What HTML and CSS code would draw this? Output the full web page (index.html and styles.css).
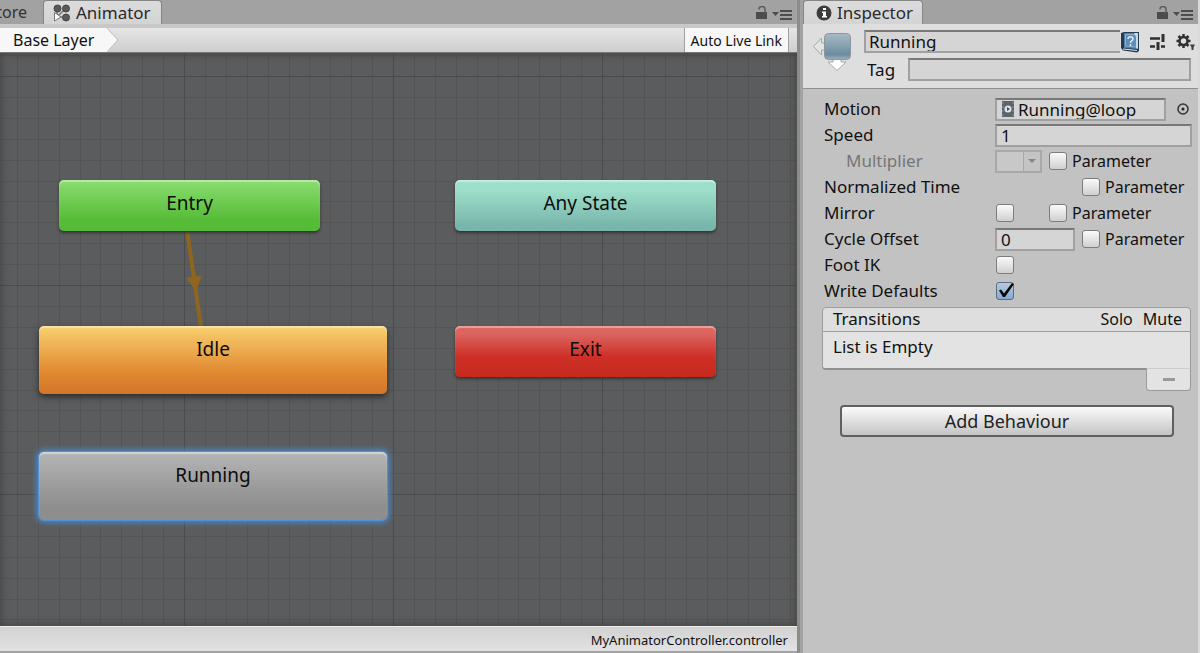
FILE: index.html
```
<!DOCTYPE html>
<html lang="en">
<head>
<meta charset="utf-8">
<title>Animator</title>
<link rel="stylesheet" href="styles.css">
</head>
<body>
<svg class="defs" aria-hidden="true">
  <symbol id="panel-menu" viewBox="0 0 38 14">
    <path d="M1 6h11v7H1z" fill="#4c4c4c"/>
    <path d="M4 3.500V3a3 2.500 0 0 1 6 0v5" fill="none" stroke="#5c5c5c" stroke-width="1.500"/>
    <path d="M17 6h7l-3.500 4z" fill="#4c4c4c"/>
    <path d="M25 5h12M25 9h12M25 13h12" stroke="#4c4c4c" stroke-width="2"/>
  </symbol>
</svg>
<main class="editor">
  <section class="panel animator">
    <header class="tabs">
      <button class="tab tab-cut">tore</button>
      <button class="tab tab-active tab-animator">
        <svg width="18" height="18" viewBox="0 0 18 18" aria-hidden="true">
          <path d="M3.500 6L5 13M9.500 13H7M11 6L5 12" stroke="#777" stroke-width="1.500" fill="none"/>
          <g fill="#5a5a5a" stroke="#444"><circle cx="4.500" cy="4.500" r="3.500"/><circle cx="13" cy="4.500" r="3.500"/><circle cx="13" cy="13.500" r="3.500"/></g>
          <path d="M1.500 8.500v8.500l6.500-4z" fill="#fff" stroke="#777"/>
        </svg>
        Animator
      </button>
      <button class="menu" aria-label="Animator panel menu"><svg width="38" height="14"><use href="#panel-menu"/></svg></button>
    </header>
    <div class="toolbar">
      <button class="crumb"><span>Base Layer</span>
        <svg width="12" height="24" viewBox="0 0 12 24" aria-hidden="true"><path d="M0 0l11 12L0 24z" fill="#f7f7f7"/><path d="M0 0l11 12L0 24" fill="none" stroke="#bbb"/></svg>
      </button>
      <button class="live">Auto Live Link</button>
    </div>
    <div class="canvas">
      <svg class="grid" aria-hidden="true">
        <defs>
          <pattern id="cells" x="184" y="23" width="209" height="209" patternUnits="userSpaceOnUse">
            <path d="M21.500 0v209M42.500 0v209M63.500 0v209M84.500 0v209M105.500 0v209M125.500 0v209M146.500 0v209M167.500 0v209M188.500 0v209M0 21.500h209M0 42.500h209M0 63.500h209M0 84.500h209M0 105.500h209M0 125.500h209M0 146.500h209M0 167.500h209M0 188.500h209" stroke="#555453"/>
            <path d="M.5 0v209M0 .5h209" stroke="#4a4b4a"/>
          </pattern>
        </defs>
        <rect width="100%" height="100%" fill="url(#cells)"/>
        <g stroke="#8f651f" fill="#8f651f">
          <path d="M187 177L201 274" stroke-width="4"/>
          <path d="M187 225l14-2-5 15z" stroke-width="1"/>
        </g>
      </svg>
      <button class="node entry">Entry</button>
      <button class="node any">Any State</button>
      <button class="node idle">Idle</button>
      <button class="node exit">Exit</button>
      <button class="node running">Running</button>
    </div>
    <footer class="status">MyAnimatorController.controller</footer>
  </section>

  <section class="panel inspector">
    <header class="tabs">
      <button class="tab tab-active tab-inspector">
        <svg width="16" height="16" viewBox="0 0 16 16" aria-hidden="true"><circle cx="8" cy="8" r="7.500" fill="#3c3c3c"/><path d="M7 3h3v2H7zM6 6.500h4V11h1v1.500H6V11h1V8H6z" fill="#fff"/></svg>
        Inspector
      </button>
      <button class="menu" aria-label="Inspector panel menu"><svg width="38" height="14"><use href="#panel-menu"/></svg></button>
    </header>
    <div class="heading">
      <svg class="state-icon" width="42" height="42" viewBox="0 0 42 42" aria-hidden="true">
        <defs><linearGradient id="state" x2="0" y2="1"><stop offset="0" stop-color="#a9bac6"/><stop offset=".5" stop-color="#83a0ae"/><stop offset=".8" stop-color="#6c8ba0"/><stop offset="1" stop-color="#9db2be"/></linearGradient></defs>
        <path d="M1.500 16.500L9.500 8v5h5v7h-5v5z" fill="#e4e4e4" stroke="#a8a8a8"/>
        <path d="M21 28v4h-5l9 8.500 9-8.500h-5v-4z" fill="#fff" stroke="#a8a8a8"/>
        <rect x="12.500" y="3.500" width="26" height="26" rx="4" fill="url(#state)" stroke="#8a979f"/>
      </svg>
      <div class="identity">
        <div class="identity-row">
          <input class="field name" aria-label="State name" value="Running">
          <button class="icon-button help" aria-label="Help">
            <svg width="20" height="22" viewBox="0 0 20 22" aria-hidden="true">
              <path d="M1 2L4 1H19V20L17 21.500 3 19.500 1 17z" fill="#283a4d"/>
              <path d="M4 2h14v16l-14-1z" fill="#4e7eab"/><path d="M5.500 3.500h11v12.500l-11-1z" fill="#5d8cba" stroke="#8bb0d2"/>
              <path d="M14 2h4v16l-2-1V6z" fill="#c6d8e6"/><path d="M3 18l14 1.500" stroke="#dbe3ea"/>
              <path d="M8 8c0-3 5-3 5 0 0 2-2.500 1.500-2.500 4M10.500 13v2" fill="none" stroke="#dbe8f3" stroke-width="1.500"/>
            </svg>
          </button>
          <button class="icon-button" aria-label="Presets">
            <svg width="16" height="18" viewBox="0 0 16 18" aria-hidden="true"><path d="M0 5.500h10M0 13.500h5M11 13.500h4" stroke="#303030" stroke-width="2.500"/><path d="M13 1v8M8 9v8" stroke="#303030" stroke-width="3"/></svg>
          </button>
          <button class="icon-button" aria-label="Settings">
            <svg width="20" height="18" viewBox="0 0 20 18" aria-hidden="true">
              <circle cx="7.500" cy="8" r="4" fill="none" stroke="#303030" stroke-width="2.500"/>
              <path d="M7.500 1v2.500M7.500 12.500V15M.5 8H3M12 8h2.500M2.500 3l2 2M10.500 11l2 2M12.500 3l-2 2M4.500 11l-2 2" stroke="#303030" stroke-width="2.500"/>
              <path d="M14 11.500h5L17.500 14.500V17h-2v-2.500z" fill="#404040"/>
            </svg>
          </button>
        </div>
        <div class="identity-row">
          <label class="tag-label" for="tag">Tag</label>
          <input class="field tag" id="tag">
        </div>
      </div>
    </div>

    <div class="form">
      <div class="row">
        <label for="motion">Motion</label>
        <div class="value">
          <div class="field object">
            <svg width="12" height="16" viewBox="0 0 12 16" aria-hidden="true"><path d="M0 0h12v16H0z" fill="#59656c"/><path d="M1 1v14M11 1v14" stroke="#86929a" stroke-dasharray="2 2"/><circle cx="6" cy="8" r="3.500" fill="#dfe3e5"/><path d="M5 6v4l3-2z" fill="#3e484e"/></svg>
            <input id="motion" value="Running@loop">
          </div>
          <button class="icon-button picker" aria-label="Select motion">
            <svg width="14" height="14" viewBox="0 0 14 14" aria-hidden="true"><circle cx="7" cy="7" r="5" fill="none" stroke="#333" stroke-width="1.500"/><circle cx="7" cy="7" r="1.500" fill="#222"/></svg>
          </button>
        </div>
      </div>
      <div class="row"><label for="speed">Speed</label><div class="value"><input class="field grow" id="speed" value="1"></div></div>
      <div class="row">
        <label class="muted" for="multiplier">Multiplier</label>
        <div class="value"><span class="drop"><select id="multiplier" disabled><option></option></select></span><label class="check"><input type="checkbox">Parameter</label></div>
      </div>
      <div class="row"><span>Normalized Time</span><div class="value end"><label class="check"><input type="checkbox">Parameter</label></div></div>
      <div class="row"><label for="mirror">Mirror</label><div class="value"><span class="slot"><input type="checkbox" id="mirror"></span><label class="check"><input type="checkbox">Parameter</label></div></div>
      <div class="row"><label for="offset">Cycle Offset</label><div class="value"><input class="field offset" id="offset" value="0"><label class="check"><input type="checkbox">Parameter</label></div></div>
      <div class="row"><label for="foot">Foot IK</label><div class="value"><span class="slot"><input type="checkbox" id="foot"></span></div></div>
      <div class="row"><label for="defaults">Write Defaults</label><div class="value"><span class="slot ticked"><input type="checkbox" id="defaults" checked><svg width="18" height="18" viewBox="0 0 18 18" aria-hidden="true"><path d="M3 8.500l2-1 3 4L16 1l2 1-9 13H7z" fill="#080808"/></svg></span></div></div>
    </div>

    <div class="transitions">
      <div class="list-head"><span>Transitions</span><span class="column solo">Solo</span><span class="column">Mute</span></div>
      <div class="list-body">List is Empty</div>
      <button class="remove" aria-label="Remove transition"><svg width="12" height="3" aria-hidden="true"><path d="M0 0h12v3H0z" fill="#999"/></svg></button>
    </div>
    <button class="add">Add Behaviour</button>
  </section>
</main>
</body>
</html>
```
FILE: styles.css
```
* { box-sizing: border-box; }
body { margin: 0; font: 17px/24px "Noto Sans", "Open Sans", sans-serif; color: #111; background: #a2a2a2; }
button, input, select { font: inherit; color: inherit; margin: 0; }
button { border: 0; padding: 0; background: none; }
.defs { position: absolute; width: 0; height: 0; }
svg { flex: none; display: block; }

.editor { display: grid; grid-template-columns: minmax(0, 2fr) minmax(0, 1fr); min-height: 100vh; }
.panel { display: flex; flex-direction: column; }
.animator { border-right: 3px solid #8c8c8c; padding-bottom: 2px; }
.inspector { background: #c2c2c2; border-left: 3px solid #a2a2a2; border-right: 2px solid #dadada; }

.tabs { display: flex; height: 24px; background: #a2a2a2; }
.tab { display: flex; align-items: center; line-height: 22px; }
.tab-cut { justify-content: flex-end; width: 27px; overflow: hidden; margin-right: 16px; font-size: 16px; color: #333; }
.tab-active { gap: 5px; color: #2a2a2a; background: linear-gradient(#dcdcdc, #d4d4d4); border: 1px solid #858585; border-bottom: 0; border-radius: 4px 4px 0 0; }
.tab-animator { padding: 0 10px 0 9px; }
.tab-inspector { padding: 0 9px 0 12px; }
.menu { margin-left: auto; padding: 2px 4px 0 0; }

.toolbar { display: flex; justify-content: space-between; height: 29px; padding-right: 8px; border-top: 4px solid #c8c8c8; border-bottom: 1px solid #777; background: linear-gradient(#e6e6e6, #cecece); }
.crumb { display: flex; font-size: 16px; }
.crumb span { padding: 0 0 0 13px; width: 107px; text-align: left; background: #f7f7f7; line-height: 24px; }
.live { padding: 2px 6px 0; font-size: 14px; line-height: 22px; background: #f7f7f7; border: 1px solid #a0a0a0; border-width: 0 1px; }

.canvas { position: relative; flex: 1; min-height: 500px; overflow: hidden; background: #5b5c5d; }
.grid { position: absolute; width: 100%; height: 100%; }
.canvas::after { content: ""; position: absolute; inset: 0; box-shadow: inset 0 0 8px #3f3f3f; pointer-events: none; }
.node { position: absolute; width: 261px; height: 51px; padding-top: 11px; display: flex; justify-content: center; font-size: 19px; border-radius: 5px; color: #0c0c0c; box-shadow: 0 2px 3px #333, inset 0 2px 1px #ffffff66; }
.entry { left: 59px; top: 127px; background: linear-gradient(#8ade70, #56bb36 80%); }
.any { left: 455px; top: 127px; background: linear-gradient(#9ddfca 20%, #78b5aa 90%); }
.exit { left: 455px; top: 273px; background: linear-gradient(#dc6560 15%, #ce3028 60%, #c6291c); }
.idle, .running { width: 348px; height: 68px; }
.idle { left: 39px; top: 273px; background: linear-gradient(#f9d070, #e0872f 70%, #d4752a); box-shadow: 0 3px 6px #2b2b2b, inset 0 2px 1px #ffffff66; }
.running { left: 39px; top: 399px; background: linear-gradient(#b5b5b5, #8e8e8e 80%); box-shadow: 0 0 0 1px #5190d2, 0 0 6px 2px #4790da, inset 0 2px 1px #ffffff66; }

.status { height: 25px; padding-right: 9px; text-align: right; font-size: 13px; line-height: 27px; background: linear-gradient(#d2d2d2, #e2e2e2); border-top: 1px solid #eee; }

.heading { display: flex; height: 65px; padding: 6px 2px 0 9px; background: #dedede; border-bottom: 1px solid #8f8f8f; }
.identity { flex: 1; min-width: 0; padding-left: 10px; }
.identity-row { display: flex; align-items: center; height: 23px; margin-bottom: 5px; }
.field { height: 23px; min-width: 0; padding: 0 4px; border: 2px solid #a0a0a0; border-top-color: #787878; border-radius: 0; background: #d5d5d5; outline: 0; line-height: 19px; }
.name { flex: 1; border-right: 0; padding-left: 3px; }
.icon-button { flex: none; margin-left: 10px; }
.help { margin-left: 0; }
.tag-label { padding-left: 3px; width: 44px; }
.tag { flex: 1; margin-right: 5px; }

.form { display: flex; flex-direction: column; gap: 3px; padding: 8px 6px 0 21px; }
.row { display: grid; grid-template-columns: 171px minmax(0, 1fr); height: 23px; align-items: center; }
.value { display: flex; align-items: center; height: 23px; }
.grow { flex: 1; }
.object { flex: 1; display: flex; align-items: center; gap: 4px; padding-left: 5px; }
.object input { flex: 1; min-width: 0; height: 19px; border: 0; padding: 0; background: none; }
.picker { width: 16px; }
.muted { padding-left: 22px; color: #767676; }
.check { display: flex; align-items: center; gap: 5px; font-size: 16px; }
.end { padding-left: 87px; }
.offset { width: 80px; margin-right: 7px; }
.slot { width: 54px; padding-left: 1px; display: flex; }
.ticked { position: relative; }
.ticked svg { position: absolute; left: 1px; top: 0; }
input[type="checkbox"] { appearance: none; flex: none; width: 18px; height: 18px; border: 1px solid #7d7d7d; border-radius: 3px; background: linear-gradient(#fafafa, #d0d0d0); }
input[type="checkbox"]:checked { background: linear-gradient(#b8c9da, #84aad3); border-color: #5c6f82; }
.drop { position: relative; margin-right: 7px; }
.drop select { display: block; appearance: none; width: 47px; height: 23px; border: 2px solid #a8a8a8; border-radius: 0; background: linear-gradient(90deg, #c8c8c8 26px, #a8a8a8 26px, #a8a8a8 27px, #c4c4c4 27px); opacity: 1; }
.drop::after { content: ""; position: absolute; right: 6px; top: 9px; border: 4px solid transparent; border-top-color: #858585; pointer-events: none; }

.transitions { display: flex; flex-direction: column; margin: 5px 7px 0 19px; }
.list-head { display: flex; height: 25px; padding: 0 8px 0 10px; background: #dedede; border: 1px solid #9c9c9c; border-radius: 4px 4px 0 0; line-height: 22px; }
.column { font-size: 16px; }
.solo { margin-left: auto; padding-right: 10px; }
.list-body { height: 38px; padding: 3px 10px; background: #e3e3e3; border: 1px solid #9c9c9c; border-top: 0; border-bottom: 2px solid #8f8f8f; border-radius: 0 0 0 4px; }
.remove { display: flex; align-items: center; justify-content: center; align-self: flex-end; width: 45px; height: 23px; margin-top: -2px; background: #e3e3e3; border: 1px solid #999; border-top-color: #ccc; border-radius: 0 0 4px 4px; }
.add { height: 32px; margin: 14px 24px 0 37px; color: #222; border: 2px solid #606060; border-radius: 4px; background: linear-gradient(#fbfbfb, #c4c4c4); font-size: 18px; line-height: 26px; }
```
